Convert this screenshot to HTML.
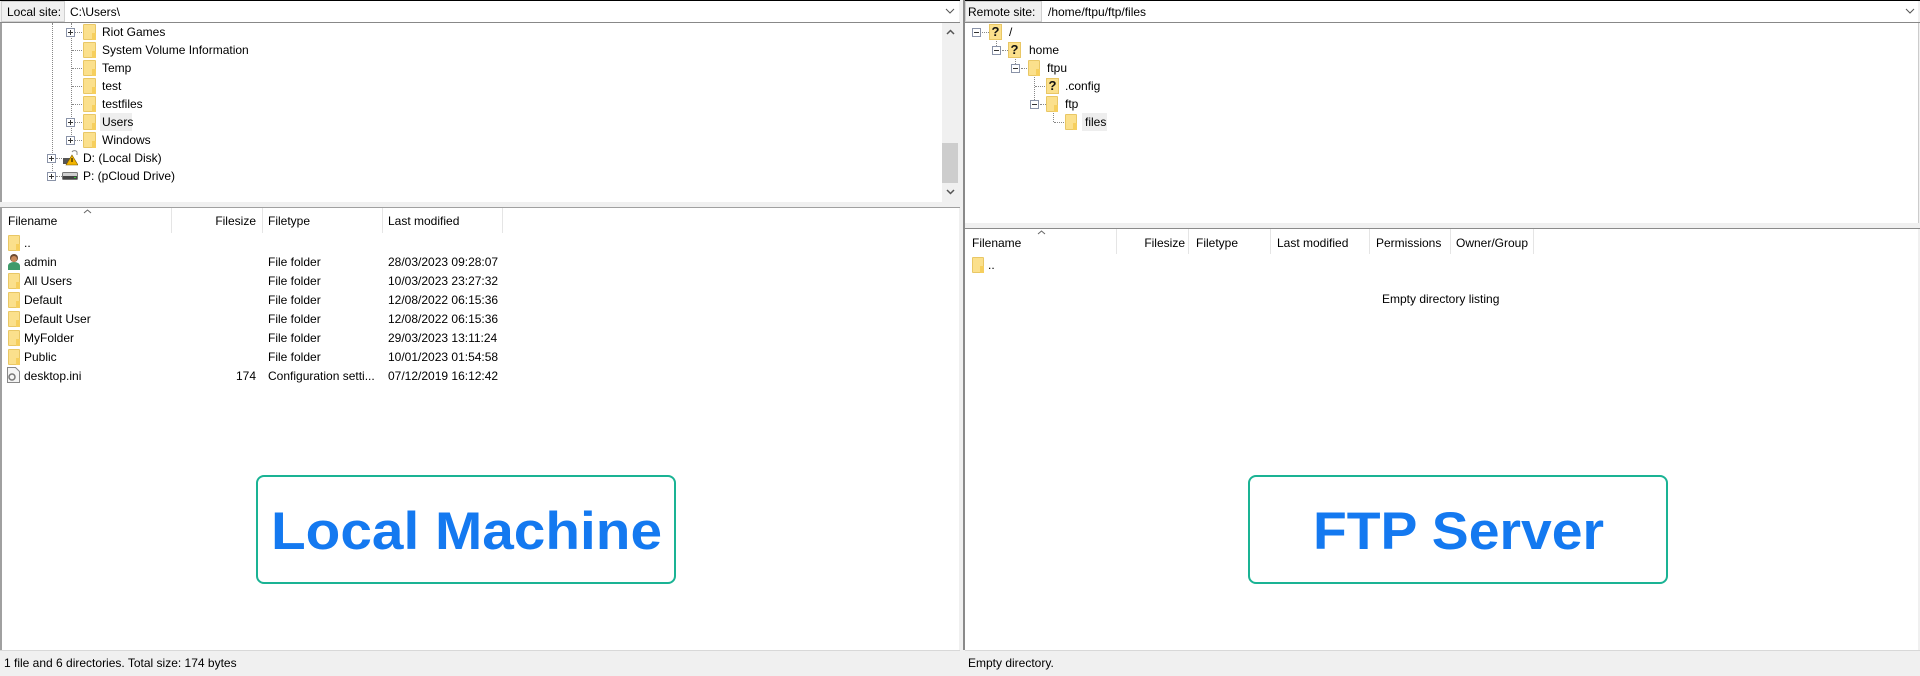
<!DOCTYPE html>
<html><head><meta charset="utf-8"><style>
*{margin:0;padding:0;box-sizing:border-box}
body{width:1920px;height:676px;background:#f0f0f0;position:relative;overflow:hidden;font-family:"Liberation Sans",sans-serif;font-size:12px;color:#000}
.a{position:absolute}
.t{position:absolute;white-space:nowrap;line-height:14px}
.fold{position:absolute;width:13px;height:16px;background:#fbe08c;border:1px solid #e9c765;border-radius:1px}
.fold:after{content:"";position:absolute;right:-1px;bottom:-1px;width:4px;height:7px;background:#f6cf5e}
.q{position:absolute;width:13px;height:16px;background:#fbe08c;border:1px solid #e9c765;font-weight:bold;font-size:13px;line-height:14px;text-align:center;color:#111}
.exp{position:absolute;width:9px;height:9px;border:1px solid #8a93a8;background:#fff}
.exp:before{content:"";position:absolute;left:1px;top:3px;width:5px;height:1px;background:#333}
.exp.p:after{content:"";position:absolute;left:3px;top:1px;width:1px;height:5px;background:#333}
.hd{position:absolute;border-bottom:1px dotted #888;height:1px}
.vd{position:absolute;border-left:1px dotted #888;width:1px}
.col{position:absolute;top:0;width:1px;height:25px;background:#e5e5e5}
</style></head><body>

<div class="a" style="left:0;top:0;width:960px;height:1px;background:#000"></div>
<div class="a" style="left:1px;top:1px;width:64px;height:21px;background:#f0f0f0;border:1px solid #d0d0d0"></div>
<div class="t" style="left:7px;top:5px">Local site:</div>
<div class="a" style="left:65px;top:1px;width:894px;height:21px;background:#fff"></div>
<div class="t" style="left:70px;top:5px">C:\Users\</div>
<svg class="a" style="left:945px;top:8px" width="10" height="6"><path d="M1 1L5 5L9 1" stroke="#555" fill="none"/></svg>
<div class="a" style="left:0;top:22px;width:960px;height:1px;background:#888"></div>
<div class="a" style="left:0;top:23px;width:2px;height:179px;background:#a0a0a0"></div>
<div class="a" style="left:2px;top:23px;width:940px;height:179px;background:#fff"></div>
<div class="a" style="left:942px;top:23px;width:17px;height:179px;background:#f0f0f0"></div>
<div class="a" style="left:942px;top:143px;width:16px;height:40px;background:#cdcdcd"></div>
<svg class="a" style="left:946px;top:29px" width="9" height="6"><path d="M1 5L4.5 1.5L8 5" stroke="#555" stroke-width="1.5" fill="none"/></svg>
<svg class="a" style="left:946px;top:189px" width="9" height="6"><path d="M1 1L4.5 4.5L8 1" stroke="#555" stroke-width="1.5" fill="none"/></svg>

<div class="vd" style="left:52px;top:23px;height:154px"></div>
<div class="vd" style="left:71px;top:23px;height:118px"></div>
<div class="exp p" style="left:66px;top:28px"></div><div class="hd" style="left:75px;top:32px;width:7px"></div><div class="fold" style="left:83px;top:24px"></div><div class="t" style="left:102px;top:25px">Riot Games</div>
<div class="hd" style="left:72px;top:50px;width:10px"></div><div class="fold" style="left:83px;top:42px"></div><div class="t" style="left:102px;top:43px">System Volume Information</div>
<div class="hd" style="left:72px;top:68px;width:10px"></div><div class="fold" style="left:83px;top:60px"></div><div class="t" style="left:102px;top:61px">Temp</div>
<div class="hd" style="left:72px;top:86px;width:10px"></div><div class="fold" style="left:83px;top:78px"></div><div class="t" style="left:102px;top:79px">test</div>
<div class="hd" style="left:72px;top:104px;width:10px"></div><div class="fold" style="left:83px;top:96px"></div><div class="t" style="left:102px;top:97px">testfiles</div>
<div class="exp p" style="left:66px;top:118px"></div><div class="hd" style="left:75px;top:122px;width:7px"></div><div class="fold" style="left:83px;top:114px"></div><div class="a" style="left:100px;top:113px;width:32px;height:18px;background:#eeeeee"></div><div class="t" style="left:102px;top:115px">Users</div>
<div class="exp p" style="left:66px;top:136px"></div><div class="hd" style="left:75px;top:140px;width:7px"></div><div class="fold" style="left:83px;top:132px"></div><div class="t" style="left:102px;top:133px">Windows</div>
<div class="exp p" style="left:47px;top:154px"></div><div class="hd" style="left:56px;top:158px;width:6px"></div>
<svg class="a" style="left:62px;top:149px" width="16" height="17"><rect x="1" y="9" width="9" height="6" fill="#555"/><path d="M10 3a3 3 0 0 1 5 0v3" stroke="#888" fill="none"/><path d="M10 6L16 16H4Z" fill="#f2b400" stroke="#7a5a00" stroke-width=".6"/><rect x="9.5" y="9" width="1" height="4" fill="#000"/></svg>
<div class="t" style="left:83px;top:151px">D: (Local Disk)</div>
<div class="exp p" style="left:47px;top:172px"></div><div class="hd" style="left:56px;top:176px;width:6px"></div>
<svg class="a" style="left:62px;top:171px" width="16" height="9"><rect x="0.5" y="1.5" width="15" height="7" rx="1" fill="#d0d0d0" stroke="#777"/><rect x="1" y="5" width="14" height="3" fill="#444"/><rect x="12" y="6" width="2" height="1" fill="#3c3"/></svg>
<div class="t" style="left:83px;top:169px">P: (pCloud Drive)</div>

<div class="a" style="left:0;top:207px;width:960px;height:1px;background:#a0a0a0"></div>
<div class="a" style="left:0;top:208px;width:2px;height:442px;background:#a0a0a0"></div>
<div class="a" style="left:2px;top:208px;width:957px;height:442px;background:#fff"></div>
<svg class="a" style="left:83px;top:209px" width="9" height="5"><path d="M1 4L4.5 1L8 4" stroke="#666" fill="none"/></svg>
<div class="a" style="left:2px;top:208px;width:957px;height:26px">
<div class="col" style="left:169px"></div><div class="col" style="left:260px"></div><div class="col" style="left:380px"></div><div class="col" style="left:500px"></div>
</div>
<div class="t" style="left:8px;top:214px">Filename</div>
<div class="t" style="left:210px;top:214px;width:46px;text-align:right">Filesize</div>
<div class="t" style="left:268px;top:214px">Filetype</div>
<div class="t" style="left:388px;top:214px">Last modified</div>

<div class="fold" style="left:8px;top:235px;width:12px"></div><div class="t" style="left:24px;top:236px">..</div>
<svg class="a" style="left:7px;top:253px" width="14" height="17"><circle cx="7" cy="5" r="4" fill="#6b4a30"/><circle cx="7" cy="6" r="3" fill="#c98a5a"/><path d="M1 17v-4a6 4 0 0 1 12 0v4Z" fill="#3f9a6a"/></svg><div class="t" style="left:24px;top:255px">admin</div><div class="t" style="left:268px;top:255px">File folder</div><div class="t" style="left:388px;top:255px">28/03/2023 09:28:07</div>
<div class="fold" style="left:8px;top:273px;width:12px"></div><div class="t" style="left:24px;top:274px">All Users</div><div class="t" style="left:268px;top:274px">File folder</div><div class="t" style="left:388px;top:274px">10/03/2023 23:27:32</div>
<div class="fold" style="left:8px;top:292px;width:12px"></div><div class="t" style="left:24px;top:293px">Default</div><div class="t" style="left:268px;top:293px">File folder</div><div class="t" style="left:388px;top:293px">12/08/2022 06:15:36</div>
<div class="fold" style="left:8px;top:311px;width:12px"></div><div class="t" style="left:24px;top:312px">Default User</div><div class="t" style="left:268px;top:312px">File folder</div><div class="t" style="left:388px;top:312px">12/08/2022 06:15:36</div>
<div class="fold" style="left:8px;top:330px;width:12px"></div><div class="t" style="left:24px;top:331px">MyFolder</div><div class="t" style="left:268px;top:331px">File folder</div><div class="t" style="left:388px;top:331px">29/03/2023 13:11:24</div>
<div class="fold" style="left:8px;top:349px;width:12px"></div><div class="t" style="left:24px;top:350px">Public</div><div class="t" style="left:268px;top:350px">File folder</div><div class="t" style="left:388px;top:350px">10/01/2023 01:54:58</div>
<svg class="a" style="left:7px;top:367px" width="13" height="16"><path d="M0.5 0.5h8l4 4v11h-12Z" fill="#f4f4f4" stroke="#888"/><circle cx="5" cy="10" r="3" fill="none" stroke="#777" stroke-width="1.5"/></svg><div class="t" style="left:24px;top:369px">desktop.ini</div><div class="t" style="left:210px;top:369px;width:46px;text-align:right">174</div><div class="t" style="left:268px;top:369px">Configuration setti...</div><div class="t" style="left:388px;top:369px">07/12/2019 16:12:42</div>

<div class="a" style="left:256px;top:475px;width:420px;height:109px;border:2.5px solid #1ab394;border-radius:8px;background:#fff"></div>
<svg class="a" style="left:256px;top:475px" width="420" height="109"><text x="15" y="74" textLength="391" lengthAdjust="spacingAndGlyphs" font-family="Liberation Sans" font-weight="bold" font-size="53" fill="#1479f0">Local Machine</text></svg>

<div class="a" style="left:0;top:650px;width:960px;height:1px;background:#d8d8d8"></div>
<div class="t" style="left:4px;top:656px">1 file and 6 directories. Total size: 174 bytes</div>

<div class="a" style="left:963px;top:0;width:957px;height:1px;background:#000"></div>
<div class="a" style="left:963px;top:0;width:2px;height:650px;background:#8a8a8a"></div>
<div class="a" style="left:965px;top:1px;width:77px;height:21px;background:#f0f0f0;border:1px solid #d0d0d0"></div>
<div class="t" style="left:968px;top:5px">Remote site:</div>
<div class="a" style="left:1042px;top:1px;width:876px;height:21px;background:#fff"></div>
<div class="t" style="left:1048px;top:5px">/home/ftpu/ftp/files</div>
<svg class="a" style="left:1905px;top:8px" width="10" height="6"><path d="M1 1L5 5L9 1" stroke="#555" fill="none"/></svg>
<div class="a" style="left:965px;top:22px;width:955px;height:1px;background:#888"></div>
<div class="a" style="left:965px;top:23px;width:953px;height:200px;background:#fff"></div>
<div class="a" style="left:1918px;top:23px;width:1px;height:200px;background:#ccc"></div>

<div class="exp" style="left:972px;top:28px"></div><div class="hd" style="left:982px;top:32px;width:7px"></div><div class="q" style="left:989px;top:24px">?</div><div class="t" style="left:1009px;top:25px">/</div>
<div class="vd" style="left:996px;top:41px;height:5px"></div>
<div class="exp" style="left:992px;top:46px"></div><div class="hd" style="left:1002px;top:50px;width:6px"></div><div class="q" style="left:1008px;top:42px">?</div><div class="t" style="left:1029px;top:43px">home</div>
<div class="vd" style="left:1015px;top:59px;height:5px"></div>
<div class="exp" style="left:1011px;top:64px"></div><div class="hd" style="left:1021px;top:68px;width:6px"></div><div class="fold" style="left:1028px;top:60px;width:12px"></div><div class="t" style="left:1047px;top:61px">ftpu</div>
<div class="vd" style="left:1034px;top:77px;height:23px"></div>
<div class="hd" style="left:1035px;top:86px;width:10px"></div><div class="q" style="left:1046px;top:78px">?</div><div class="t" style="left:1065px;top:79px">.config</div>
<div class="exp" style="left:1030px;top:100px"></div><div class="hd" style="left:1040px;top:104px;width:6px"></div><div class="fold" style="left:1046px;top:96px;width:12px"></div><div class="t" style="left:1065px;top:97px">ftp</div>
<div class="vd" style="left:1053px;top:113px;height:9px"></div><div class="hd" style="left:1054px;top:122px;width:10px"></div><div class="fold" style="left:1065px;top:114px;width:12px"></div><div class="a" style="left:1082px;top:113px;width:25px;height:18px;background:#eeeeee"></div><div class="t" style="left:1085px;top:115px">files</div>

<div class="a" style="left:965px;top:228px;width:955px;height:1px;background:#8a8a8a"></div>
<div class="a" style="left:965px;top:229px;width:953px;height:421px;background:#fff"></div>
<svg class="a" style="left:1037px;top:230px" width="9" height="5"><path d="M1 4L4.5 1L8 4" stroke="#666" fill="none"/></svg>
<div class="a" style="left:965px;top:229px;width:953px;height:26px">
<div class="col" style="left:151px"></div><div class="col" style="left:223px"></div><div class="col" style="left:305px"></div><div class="col" style="left:404px"></div><div class="col" style="left:485px"></div><div class="col" style="left:568px"></div>
</div>
<div class="t" style="left:972px;top:236px">Filename</div>
<div class="t" style="left:1130px;top:236px;width:55px;text-align:right">Filesize</div>
<div class="t" style="left:1196px;top:236px">Filetype</div>
<div class="t" style="left:1277px;top:236px">Last modified</div>
<div class="t" style="left:1376px;top:236px">Permissions</div>
<div class="t" style="left:1456px;top:236px">Owner/Group</div>
<div class="fold" style="left:972px;top:257px;width:12px"></div><div class="t" style="left:988px;top:258px">..</div>
<div class="t" style="left:1382px;top:292px">Empty directory listing</div>

<div class="a" style="left:1248px;top:475px;width:420px;height:109px;border:2.5px solid #1ab394;border-radius:8px;background:#fff"></div>
<svg class="a" style="left:1248px;top:475px" width="420" height="109"><text x="65" y="74" textLength="291" lengthAdjust="spacingAndGlyphs" font-family="Liberation Sans" font-weight="bold" font-size="53" fill="#1479f0">FTP Server</text></svg>

<div class="a" style="left:965px;top:650px;width:955px;height:1px;background:#d8d8d8"></div>
<div class="t" style="left:968px;top:656px">Empty directory.</div>
</body></html>
